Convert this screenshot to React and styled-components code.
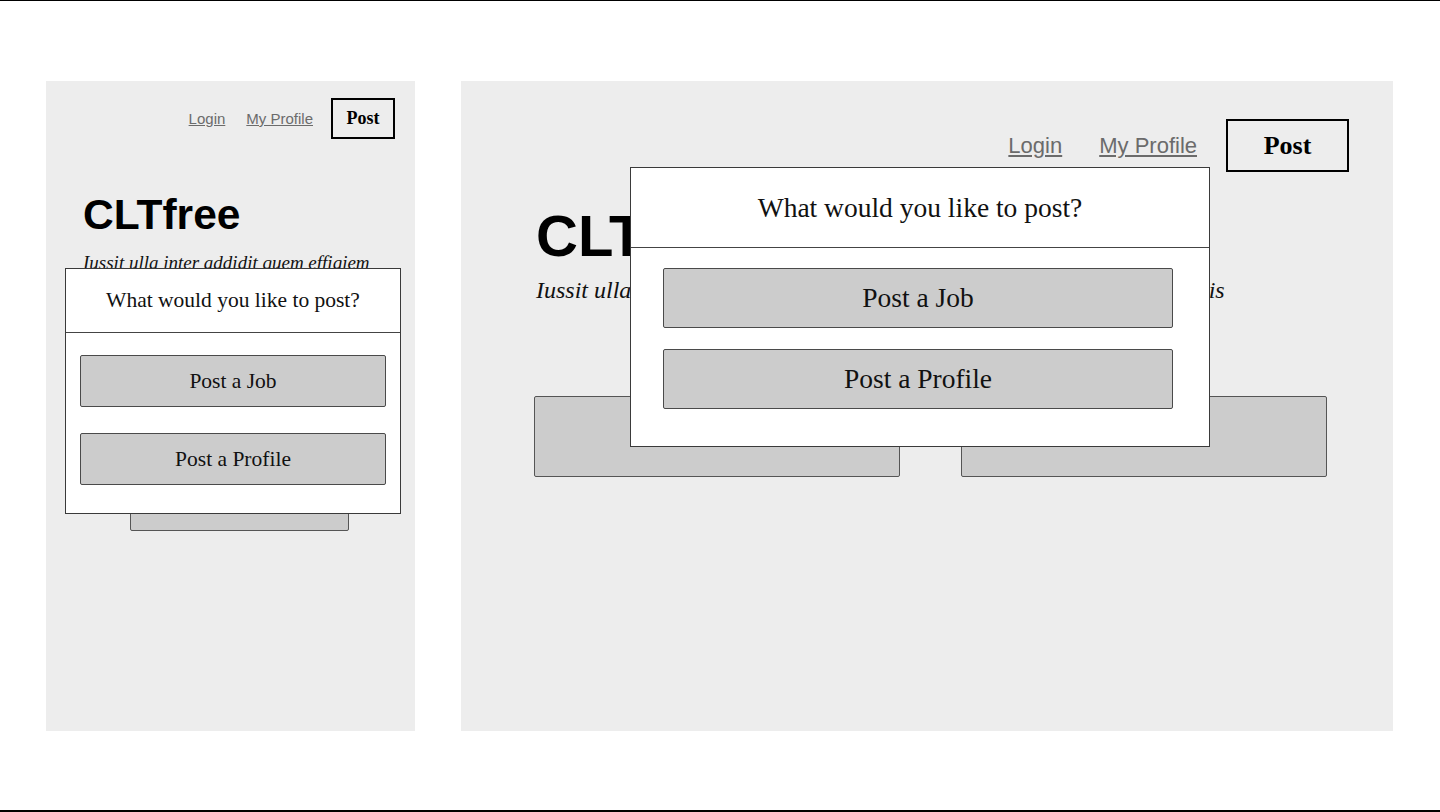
import React from "react";
import styled, { createGlobalStyle } from "styled-components";

const GlobalStyle = createGlobalStyle`
  body {
    margin: 0;
    background: #ffffff;
    font-family: "Liberation Serif", serif;
  }
`;

const Frame = styled.div`
  box-sizing: border-box;
  height: 812px;
  border-top: 1px solid #000;
  border-bottom: 2px solid #000;
  display: flex;
  align-items: flex-start;
  gap: 46px;
  padding: 80px 0 0 46px;
`;

const Panel = styled.div`
  position: relative;
  box-sizing: border-box;
  width: ${(p) => (p.$wide ? 932 : 369)}px;
  height: 650px;
  background: #ededed;
  padding: ${(p) => (p.$wide ? "38px 44px 0 75px" : "17px 20px 0 37px")};
  display: flex;
  flex-direction: column;
`;

const Nav = styled.nav`
  display: flex;
  justify-content: flex-end;
  align-items: center;
`;

const NavLink = styled.a`
  font-family: "Liberation Sans", Arial, sans-serif;
  font-size: ${(p) => (p.$wide ? 22 : 15)}px;
  color: #6b6b6b;
  text-decoration: underline;
  margin-right: ${(p) => p.$gap}px;
`;

const PostButton = styled.button`
  box-sizing: border-box;
  width: ${(p) => (p.$wide ? 123 : 64)}px;
  height: ${(p) => (p.$wide ? 53 : 41)}px;
  border: 2px solid #000;
  background: transparent;
  font-family: "Liberation Serif", serif;
  font-weight: bold;
  font-size: ${(p) => (p.$wide ? 26 : 18)}px;
  color: #000;
  padding: 0;
`;

const Title = styled.h1`
  margin: ${(p) => (p.$wide ? 31 : 52)}px 0 0;
  font-family: "Liberation Sans", Arial, sans-serif;
  font-weight: bold;
  font-size: ${(p) => (p.$wide ? 58 : 42.5)}px;
  line-height: 1.15;
  color: #000;
`;

const Tagline = styled.p`
  margin: ${(p) => (p.$wide ? 6 : 12)}px 0 0;
  font-family: "Liberation Serif", serif;
  font-style: italic;
  font-size: ${(p) => (p.$wide ? 24 : 19)}px;
  line-height: 1.2;
  color: #111;
  white-space: nowrap;
`;

const ButtonRow = styled.div`
  display: grid;
  grid-template-columns: 1fr 1fr;
  gap: 61px;
  margin: 92px 22px 0 -2px;
`;

const PageButton = styled.div`
  box-sizing: border-box;
  height: ${(p) => p.$h}px;
  width: ${(p) => (p.$w ? `${p.$w}px` : "auto")};
  align-self: ${(p) => (p.$w ? "center" : "stretch")};
  margin-top: ${(p) => p.$top || 0}px;
  background: #cccccc;
  border: 1px solid #555;
  border-radius: 2px;
`;

const Modal = styled.div`
  position: absolute;
  box-sizing: border-box;
  left: ${(p) => (p.$wide ? 169 : 19)}px;
  top: ${(p) => (p.$wide ? 86 : 187)}px;
  width: ${(p) => (p.$wide ? 580 : 336)}px;
  height: ${(p) => (p.$wide ? 280 : 246)}px;
  background: #fff;
  border: 1px solid #3a3a3a;
  display: flex;
  flex-direction: column;
`;

const ModalHeader = styled.div`
  box-sizing: border-box;
  height: ${(p) => (p.$wide ? 80 : 64)}px;
  border-bottom: 1px solid #444;
  display: flex;
  align-items: center;
  justify-content: center;
  font-size: ${(p) => (p.$wide ? 27.5 : 21.5)}px;
  color: #111;
`;

const ModalBody = styled.div`
  display: flex;
  flex-direction: column;
  gap: ${(p) => (p.$wide ? 21 : 26)}px;
  padding: ${(p) => (p.$wide ? "20px 36px 0 32px" : "22px 14px 0 14px")};
`;

const ChoiceButton = styled.button`
  box-sizing: border-box;
  height: ${(p) => (p.$wide ? 60 : 52)}px;
  background: #cccccc;
  border: 1px solid #4a4a4a;
  border-radius: 2px;
  font-family: "Liberation Serif", serif;
  font-size: ${(p) => (p.$wide ? 27.5 : 21.5)}px;
  color: #111;
  padding: 0;
`;

const PostModal = ({ wide }) => (
  <Modal $wide={wide}>
    <ModalHeader $wide={wide}>What would you like to post?</ModalHeader>
    <ModalBody $wide={wide}>
      <ChoiceButton $wide={wide}>Post a Job</ChoiceButton>
      <ChoiceButton $wide={wide}>Post a Profile</ChoiceButton>
    </ModalBody>
  </Modal>
);

const App = () => (
  <>
    <GlobalStyle />
    <Frame>
      <Panel>
        <Nav>
          <NavLink $gap={21}>Login</NavLink>
          <NavLink $gap={18}>My Profile</NavLink>
          <PostButton>Post</PostButton>
        </Nav>
        <Title>CLTfree</Title>
        <Tagline>Iussit ulla inter addidit quem effigiem</Tagline>
        <PageButton $h={52} $w={219} $top={204} />
        <PostModal />
      </Panel>

      <Panel $wide>
        <Nav>
          <NavLink $wide $gap={37}>Login</NavLink>
          <NavLink $wide $gap={29}>My Profile</NavLink>
          <PostButton $wide>Post</PostButton>
        </Nav>
        <Title $wide>CLTfree</Title>
        <Tagline $wide>Iussit ulla inter addidit quem effigiem, nubibus undis cum terris mutatis</Tagline>
        <ButtonRow>
          <PageButton $h={81} />
          <PageButton $h={81} />
        </ButtonRow>
        <PostModal wide />
      </Panel>
    </Frame>
  </>
);

export default App;
